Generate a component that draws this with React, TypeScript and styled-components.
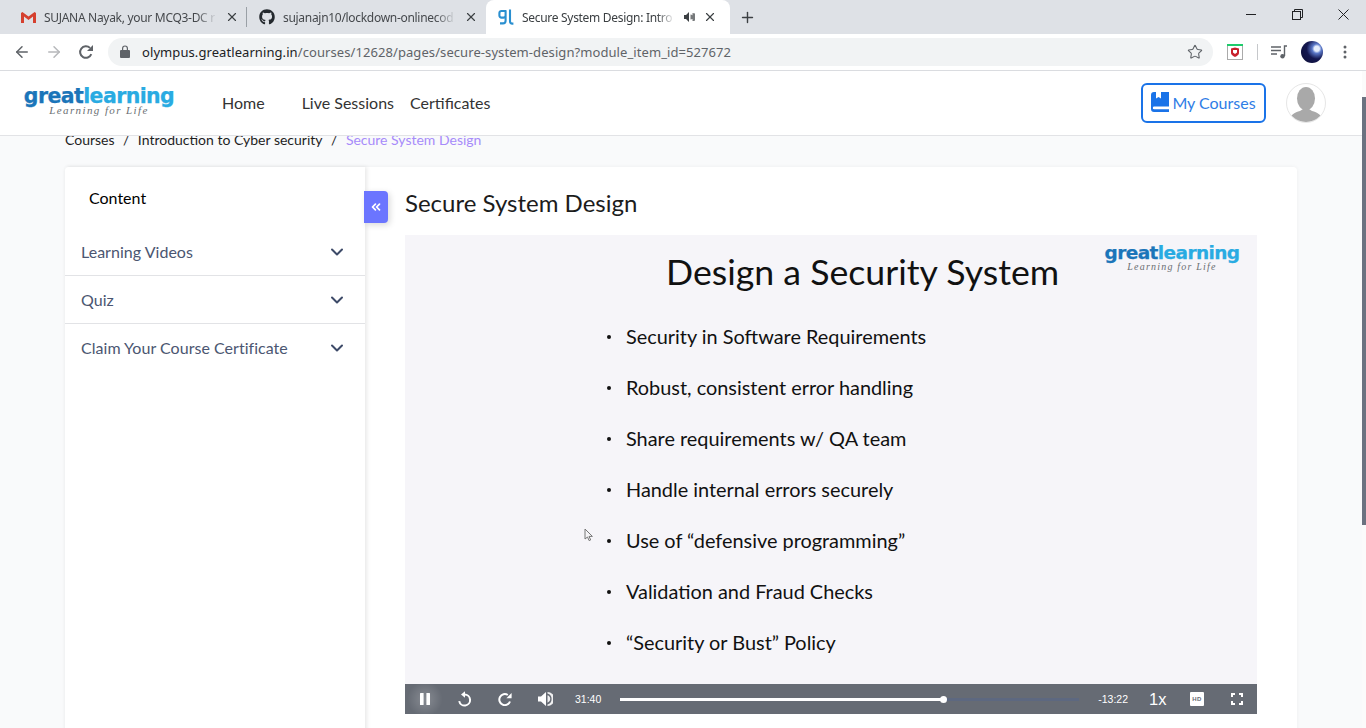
import React from "react";
import styled, { createGlobalStyle } from "styled-components";
import { FaGithub } from "react-icons/fa";
import { ArrowLeft, ArrowRight, Star, X, Plus, ChevronDown, ChevronsLeft } from "lucide-react";

const Global = createGlobalStyle`
  html, body { margin: 0; padding: 0; height: 100%; overflow: hidden; background: #fff; }
  #root { height: 100%; }
  * { box-sizing: border-box; }
`;

const Shell = styled.div`
  width: 1366px; height: 728px; display: flex; flex-direction: column; overflow: hidden;
  font-family: Lato, "Liberation Sans", sans-serif;
`;
const TabStrip = styled.div`
  height: 34px; flex: none; background: #dee1e6; display: flex; align-items: flex-end; position: relative;
  font-family: "Noto Sans", "Open Sans", sans-serif; font-size: 12px; color: #3c4043; padding-left: 8px;
`;
const Tab = styled.div<{ $active?: boolean; $w: number }>`
  width: ${p => p.$w}px; height: 34px; flex: none; display: flex; align-items: center; padding: 0 ${p => (p.$active ? 13 : 7)}px 0 12px;
  margin-left: ${p => (p.$active ? 1 : 0)}px;
  background: ${p => (p.$active ? "#fff" : "transparent")};
  border-radius: ${p => (p.$active ? "8px 8px 0 0" : "0")};
  color: ${p => (p.$active ? "#3c4043" : "#45484c")};
`;
const TabIcon = styled.span`
  width: 16px; height: 16px; flex: none; display: flex; align-items: center; justify-content: center; margin-right: 8px; color: #24292e;
`;
const TabTitle = styled.span`
  flex: 1; min-width: 0; white-space: nowrap; overflow: hidden;
  letter-spacing: -0.3px;
  -webkit-mask-image: linear-gradient(90deg, #000 88%, transparent);
  mask-image: linear-gradient(90deg, #000 88%, transparent);
`;
const TabClose = styled.span`
  flex: none; display: flex; margin-left: 8px; color: #3c4043;
`;
const TabSep = styled.span`
  width: 1px; height: 20px; background: #9aa0a6; flex: none; align-self: center;
`;
const NewTab = styled.span`
  margin-left: 9px; align-self: center; display: flex; color: #3c4043;
`;
const WindowControls = styled.div`
  margin-left: auto; display: flex; height: 34px; color: #202124; padding-top: 0;
`;
const WinButton = styled.span`
  width: 46px; height: 28px; display: flex; align-items: center; justify-content: center;
`;
const Toolbar = styled.div`
  height: 37px; flex: none; background: #fff; border-bottom: 1px solid #dadce0; display: flex; align-items: center; padding: 0 0 1px 6px;
`;
const NavIcon = styled.span<{ $c?: string }>`
  width: 32px; height: 32px; display: flex; align-items: center; justify-content: center; color: ${p => p.$c || "#5f6368"}; flex: none;
`;
const Omnibox = styled.div`
  width: 1105px; height: 28px; margin-left: 6px; flex: none; border-radius: 14px; background: #f1f3f4; display: flex; align-items: center; padding: 0 10px 0 12px;
  font-family: "Noto Sans", "Open Sans", sans-serif; font-size: 13px; color: #5f6368; letter-spacing: 0.08px;
`;
const Lock = styled.span`
  display: flex; width: 22px; flex: none;
`;
const Host = styled.span` color: #202124; `;
const Url = styled.span` flex: 1; white-space: nowrap; `;
const Ext = styled.span`
  margin-left: 14px; width: 16px; height: 16px; flex: none; display: flex;
`;
const ToolSep = styled.span` width: 1px; height: 16px; background: #c6c8cb; margin: 0 13px 0 14px; flex: none; `;
const Media = styled.span` width: 16px; height: 14px; display: flex; flex: none; margin-right: 14px; `;
const Profile = styled.span`
  width: 22px; height: 22px; border-radius: 50%; flex: none;
  background: radial-gradient(circle at 72% 35%, #e6eefc 0 12%, #5b78c8 22%, #14174f 48%, #0c0d33 100%);
`;
const Kebab = styled.span` display: flex; margin-left: 20px; flex: none; `;

const Viewport = styled.div` flex: 1; min-height: 0; display: flex; `;
const Page = styled.div` flex: 1; min-width: 0; background: #f9fafb; overflow: hidden; `;
const ScrollTrack = styled.div` width: 4px; flex: none; background: #fbfbfb; `;
const ScrollThumb = styled.div` height: 428px; margin-top: 26px; background: #6b7280; `;

const Nav = styled.header`
  height: 65px; background: #fff; border-bottom: 1px solid #e2e3e6; display: flex; align-items: center; position: relative; z-index: 2; padding: 0 36px 2px 24px;
`;
const Logo = styled.div<{ $small?: boolean }>`
  display: flex; flex-direction: column; align-items: center; width: ${p => (p.$small ? 136 : 150)}px; flex: none;
`;
const LogoWord = styled.div<{ $small?: boolean }>`
  font-family: "DejaVu Sans", sans-serif; font-weight: 700; font-size: ${p => (p.$small ? 18.5 : 20.5)}px; line-height: ${p => (p.$small ? 16 : 18)}px; letter-spacing: -0.6px; white-space: nowrap; color: #29abe2;
  -webkit-text-stroke: 0.25px currentColor;
  margin-top: ${p => (p.$small ? 0 : -1)}px;
`;
const LogoDark = styled.span` color: #1b75b9; `;
const LogoTag = styled.div<{ $small?: boolean }>`
  font-family: "Liberation Serif", serif; font-style: italic; font-size: ${p => (p.$small ? 10 : 11)}px; line-height: 11px; letter-spacing: ${p => (p.$small ? 1.2 : 1.4)}px; color: #6b6f73; white-space: nowrap;
`;
const NavLink = styled.a<{ $ml: number }>`
  margin-left: ${p => p.$ml}px; font-size: 16px; color: #333; white-space: nowrap;
`;
const Right = styled.div` margin-left: auto; padding-top: 2px; display: flex; align-items: center; gap: 20px; `;
const CoursesBtn = styled.button`
  width: 125px; height: 40px; border: 2px solid #1a73e8; border-radius: 6px; background: #fff; display: flex; align-items: center; justify-content: center; gap: 3px;
  font-family: Lato, sans-serif; font-size: 16px; color: #2f7de6; padding: 0 0 2px;
`;
const AvatarRing = styled.span`
  width: 40px; height: 40px; border-radius: 50%; border: 1px solid #e6e6e6; overflow: hidden; display: flex; flex: none; background: #fff;
`;
const Crumbs = styled.nav`
  margin: -4px 0 0 65px; height: 35px; display: flex; font-size: 14px; line-height: 16px; color: #1e1e1e; white-space: nowrap;
`;
const CrumbSep = styled.span` margin: 0 8.5px; `;
const CrumbNow = styled.span` color: #a78bfa; `;
const Card = styled.main`
  width: 1232px; margin-left: 65px; height: 600px; background: #fff; border-radius: 4px 4px 0 0; display: flex;
  box-shadow: 0 0 4px rgba(0,0,0,.05);
`;
const Side = styled.aside`
  width: 300px; flex: none; box-shadow: 2px 0 4px rgba(0,0,0,.09); position: relative;
`;
const SideHead = styled.div`
  height: 61px; padding: 21px 0 0 24px; font-size: 16px; line-height: 20px; color: #000;
`;
const Row = styled.div<{ $last?: boolean }>`
  height: 48px; display: flex; align-items: center; justify-content: space-between; padding: 0 18px 0 16px;
  font-size: 16px; letter-spacing: 0.03px; color: #4b5671; border-bottom: 1px solid ${p => (p.$last ? "transparent" : "#e2e3e6")};
`;
const Toggle = styled.button`
  position: absolute; left: 299px; top: 24px; width: 24px; height: 32px; border: 0; border-radius: 0 4px 4px 0; background: #6b75ff; color: #fff; padding: 0; display: flex; align-items: center; justify-content: center;
  box-shadow: 2px 2px 6px rgba(0,0,0,.15);
`;
const Content = styled.section` flex: 1; min-width: 0; padding: 20px 40px 0 40px; `;
const Title = styled.h1`
  margin: 0 0 16px; font-weight: 400; font-size: 24px; line-height: 32px; color: #1c1c1c; 
`;
const Player = styled.div` width: 852px; display: flex; flex-direction: column; `;
const Slide = styled.div`
  height: 449px; background: #f6f5f9; position: relative; display: flex; flex-direction: column; padding-left: 202px;
  font-family: Lato, sans-serif; color: #111;
`;
const SlideTitle = styled.h2`
  margin: 15px 0 29px 59px; font-weight: 400; font-size: 35.7px; line-height: 44px; white-space: nowrap; color: #111;
`;
const Points = styled.ul` margin: 0; padding: 0; list-style: none; display: flex; flex-direction: column; gap: 25px; `;
const Point = styled.li`
  display: flex; font-size: 19.9px; line-height: 26px; white-space: nowrap;
`;
const Dot = styled.span`
  width: 4px; height: 4px; margin: 12px 15px 0 0; border-radius: 50%; background: #111; flex: none;
`;
const SlideLogo = styled.div` position: absolute; right: 17px; top: 10px; `;
const Cursor = styled.svg` position: absolute; left: 179px; top: 293px; `;
const Controls = styled.div`
  height: 30px; background: #666b74; display: flex; align-items: center; color: #fff; font-family: "Liberation Sans", sans-serif; font-size: 10.5px;
`;
const CtrlBtn = styled.span<{ $glow?: boolean }>`
  width: 40px; height: 30px; display: flex; align-items: center; justify-content: center; flex: none;
  background: ${p => (p.$glow ? "radial-gradient(circle, rgba(255,255,255,.22), rgba(255,255,255,0) 70%)" : "none")};
`;
const Time = styled.span<{ $ml: number; $mr: number }>` margin: 0 ${p => p.$mr}px 0 ${p => p.$ml}px; flex: none; `;
const Track = styled.div` flex: 1; height: 3px; background: #5d6880; position: relative; `;
const Fill = styled.div` height: 3px; background: #fff; `;
const Knob = styled.span` position: absolute; top: -2px; width: 7px; height: 7px; margin-left: -3px; border-radius: 50%; background: #fff; `;
const Speed = styled.span` font-size: 16.5px; width: 17px; flex: none; margin-right: 24px; `;
const Hd = styled.span`
  width: 14px; height: 14px; background: #fff; border-radius: 1px; color: #666b74; font-size: 6px; font-weight: 700; display: flex; align-items: center; justify-content: center; flex: none; letter-spacing: .5px; margin-right: 13px;
`;

const Gmail = () => (
  <svg width="15" height="11" viewBox="0 0 15 11">
    <path d="M0 1V11H3V4.6L7.5 8 12 4.6V11H15V1L13.6 0 7.5 4.6 1.4 0Z" fill="#d5402f" />
  </svg>
);
const GlIcon = () => (
  <svg width="16" height="16" viewBox="0 0 16 16" fill="none" stroke="#2a8fd0" strokeWidth="2.1">
    <path d="M8 2H3.4A2 2 0 0 0 1.4 4v2.6a2 2 0 0 0 2 2h2.2a2 2 0 0 0 2-2V1.2v10.6a2.6 2.6 0 0 1-2.6 2.6H2" />
    <path d="M12 0.6v11.6a2.4 2.4 0 0 0 2.4 2.4h1" />
  </svg>
);
const Speaker = () => (
  <svg width="12" height="12" viewBox="0 0 12 12" fill="#3c4043">
    <path d="M1 4h2l3-3v10L3 8H1z" /><path d="M7.5 3.5v5a2.5 2.5 0 0 0 0-5zM9.5 2v8a4 4 0 0 0 0-8z" opacity=".7" />
  </svg>
);
const Shield = () => (
  <svg width="16" height="16" viewBox="0 0 16 16">
    <rect x=".5" y=".5" width="15" height="15" fill="#fff" stroke="#aaa" />
    <rect width="16" height="2" fill="#1ecb6b" />
    <path d="M4 4.5 8 3.6l4 .9v4.6c0 1.8-2 3-4 4-2-1-4-2.2-4-4z" fill="#c8202c" />
    <path d="M6 6h4v2.5L8 10 6 8.5z" fill="#fff" />
  </svg>
);
const MediaIcon = () => (
  <svg width="16" height="14" viewBox="0 0 16 14" fill="none" stroke="#5f6368" strokeWidth="1.3">
    <path d="M0 2h10M0 5.5h10M0 9h6" />
    <path d="M13.5 11V1H16" strokeWidth="1.4" /><circle cx="11.5" cy="11.3" r="2.2" fill="#5f6368" stroke="none" />
  </svg>
);
const KebabIcon = () => (
  <svg width="4" height="14" viewBox="0 0 4 14" fill="#5f6368"><circle cx="2" cy="2" r="1.5" /><circle cx="2" cy="7" r="1.5" /><circle cx="2" cy="12" r="1.5" /></svg>
);
const LockIcon = () => (
  <svg width="10" height="13" viewBox="0 0 10 13" fill="#5f6368">
    <path d="M1 5h1V3.4a3 3 0 0 1 6 0V5h1a1 1 0 0 1 1 1v6a1 1 0 0 1-1 1H1a1 1 0 0 1-1-1V6a1 1 0 0 1 1-1zm2.2 0h3.6V3.4a1.8 1.8 0 0 0-3.6 0z" />
  </svg>
);
const Reload = () => (
  <svg width="16" height="16" viewBox="0 0 16 16" fill="none" stroke="#5f6368" strokeWidth="2">
    <path d="M13.3 10.2A5.8 5.8 0 1 1 12 3.9" /><path d="M15 1v6H9z" fill="#5f6368" stroke="none" />
  </svg>
);
const WinMin = () => (
  <svg width="10" height="1" viewBox="0 0 10 1" fill="#202124"><rect width="10" height="1" /></svg>
);
const WinClose = () => (
  <svg width="11" height="11" viewBox="0 0 11 11" fill="none" stroke="#202124"><path d="M.5.5l10 10M10.5.5l-10 10" /></svg>
);
const Restore = () => (
  <svg width="11" height="11" viewBox="0 0 11 11" fill="none" stroke="#202124">
    <rect x=".5" y="2.5" width="8" height="8" /><path d="M2.5 2.5v-2h8v8h-2" />
  </svg>
);
const BookIcon = () => (
  <svg width="18" height="20" viewBox="0 0 18 20" fill="#1a73e8">
    <path d="M3 0h2v6.5L7.5 5 10 6.5V0h8v14.5H3.2a1.4 1.4 0 0 0 0 2.8H18V20H3a3 3 0 0 1-3-3V3a3 3 0 0 1 3-3z" />
  </svg>
);
const Person = () => (
  <svg width="38" height="38" viewBox="0 0 38 38" fill="#a9a9a9">
    <ellipse cx="19" cy="14.5" rx="9" ry="11.5" />
    <path d="M2 38c0-7 6-9.5 11-11l3-2h6l3 2c5 1.5 11 4 11 11z" />
  </svg>
);
const PauseIcon = () => (
  <svg width="10" height="12" viewBox="0 0 10 12" fill="#fff"><rect width="3.6" height="12" rx=".5" /><rect x="6.4" width="3.6" height="12" rx=".5" /></svg>
);
const Replay = () => (
  <svg width="14" height="16" viewBox="0 0 14 16" fill="none" stroke="#fff" strokeWidth="2">
    <path d="M6.5 3.5a5.5 5.5 0 1 1-5.3 6.6" /><path d="M7 .3 3 3.5 7 6.7z" fill="#fff" stroke="none" />
  </svg>
);
const Forward = () => (
  <svg width="14" height="14" viewBox="0 0 14 14" fill="none" stroke="#fff" strokeWidth="2">
    <path d="M12 9.5A5.5 5.5 0 1 1 9.8 3" /><path d="M13.6 1v5.2H8.4z" fill="#fff" stroke="none" />
  </svg>
);
const Volume = () => (
  <svg width="15" height="14" viewBox="0 0 15 14" fill="#fff">
    <path d="M0 4.5h3L8 0v14L3 9.5H0z" /><path d="M9.5 3.2a4 4 0 0 1 0 7.6zM9.5 0v1.6a5.6 5.6 0 0 1 0 10.8V14a7 7 0 0 0 0-14z" opacity=".9" />
  </svg>
);
const Fullscreen = () => (
  <svg width="12" height="12" viewBox="0 0 12 12" fill="none" stroke="#fff" strokeWidth="2">
    <path d="M1 4V1h3M8 1h3v3M11 8v3H8M4 11H1V8" />
  </svg>
);

const BrandLogo = ({ small }: { small?: boolean }) => (
  <Logo $small={small}>
    <LogoWord $small={small}><LogoDark>great</LogoDark>learning</LogoWord>
    <LogoTag $small={small}>Learning for Life</LogoTag>
  </Logo>
);

const points = [
  "Security in Software Requirements",
  "Robust, consistent error handling",
  "Share requirements w/ QA team",
  "Handle internal errors securely",
  "Use of “defensive programming”",
  "Validation and Fraud Checks",
  "“Security or Bust” Policy",
];
const sections = ["Learning Videos", "Quiz", "Claim Your Course Certificate"];

export default function App() {
  return (
    <Shell>
      <Global />
      <TabStrip>
        <Tab $w={238}>
          <TabIcon><Gmail /></TabIcon>
          <TabTitle>SUJANA Nayak, your MCQ3-DC r</TabTitle>
          <TabClose><X size={14} strokeWidth={2} /></TabClose>
        </Tab>
        <TabSep />
        <Tab $w={238}>
          <TabIcon><FaGithub size={16} /></TabIcon>
          <TabTitle>sujanajn10/lockdown-onlinecod</TabTitle>
          <TabClose><X size={14} strokeWidth={2} /></TabClose>
        </Tab>
        <Tab $w={244} $active>
          <TabIcon><GlIcon /></TabIcon>
          <TabTitle>Secure System Design: Intro</TabTitle>
          <TabClose><Speaker /></TabClose>
          <TabClose><X size={14} strokeWidth={2} /></TabClose>
        </Tab>
        <NewTab><Plus size={17} strokeWidth={2} /></NewTab>
        <WindowControls>
          <WinButton><WinMin /></WinButton>
          <WinButton><Restore /></WinButton>
          <WinButton><WinClose /></WinButton>
        </WindowControls>
      </TabStrip>
      <Toolbar>
        <NavIcon><ArrowLeft size={18} strokeWidth={2} /></NavIcon>
        <NavIcon $c="#b6b8bb"><ArrowRight size={18} strokeWidth={2} /></NavIcon>
        <NavIcon><Reload /></NavIcon>
        <Omnibox>
          <Lock><LockIcon /></Lock>
          <Url><Host>olympus.greatlearning.in</Host>/courses/12628/pages/secure-system-design?module_item_id=527672</Url>
          <Star size={16} strokeWidth={1.6} color="#5f6368" />
        </Omnibox>
        <Ext><Shield /></Ext>
        <ToolSep />
        <Media><MediaIcon /></Media>
        <Profile />
        <Kebab><KebabIcon /></Kebab>
      </Toolbar>
      <Viewport>
        <Page>
          <Nav>
            <BrandLogo />
            <NavLink $ml={48}>Home</NavLink>
            <NavLink $ml={37}>Live Sessions</NavLink>
            <NavLink $ml={16}>Certificates</NavLink>
            <Right>
              <CoursesBtn><BookIcon />My Courses</CoursesBtn>
              <AvatarRing><Person /></AvatarRing>
            </Right>
          </Nav>
          <Crumbs>
            <span>Courses</span><CrumbSep>/</CrumbSep>
            <span>Introduction to Cyber security</span><CrumbSep>/</CrumbSep>
            <CrumbNow>Secure System Design</CrumbNow>
          </Crumbs>
          <Card>
            <Side>
              <SideHead>Content</SideHead>
              {sections.map((s, i) => (
                <Row key={s} $last={i === sections.length - 1}>
                  {s}
                  <ChevronDown size={20} strokeWidth={2.4} color="#3d4a68" />
                </Row>
              ))}
              <Toggle><ChevronsLeft size={14} strokeWidth={3} /></Toggle>
            </Side>
            <Content>
              <Title>Secure System Design</Title>
              <Player>
                <Slide>
                  <SlideTitle>Design a Security System</SlideTitle>
                  <Points>
                    {points.map(p => <Point key={p}><Dot />{p}</Point>)}
                  </Points>
                  <SlideLogo><BrandLogo small /></SlideLogo>
                  <Cursor width="10" height="14" viewBox="0 0 10 14" fill="#f5f4f7" stroke="#777" strokeWidth="1">
                    <path d="M1 1v10l2.5-2 1.6 3.6 1.6-.7L5 8.4h3.4z" />
                  </Cursor>
                </Slide>
                <Controls>
                  <CtrlBtn $glow><PauseIcon /></CtrlBtn>
                  <CtrlBtn><Replay /></CtrlBtn>
                  <CtrlBtn><Forward /></CtrlBtn>
                  <CtrlBtn><Volume /></CtrlBtn>
                  <Time $ml={10} $mr={19}>31:40</Time>
                  <Track>
                    <Fill style={{ width: "70.4%" }} />
                    <Knob style={{ left: "70.4%" }} />
                  </Track>
                  <Time $ml={19} $mr={21}>-13:22</Time>
                  <Speed>1x</Speed>
                  <Hd>HD</Hd>
                  <CtrlBtn><Fullscreen /></CtrlBtn>
                </Controls>
              </Player>
            </Content>
          </Card>
        </Page>
        <ScrollTrack><ScrollThumb /></ScrollTrack>
      </Viewport>
    </Shell>
  );
}
